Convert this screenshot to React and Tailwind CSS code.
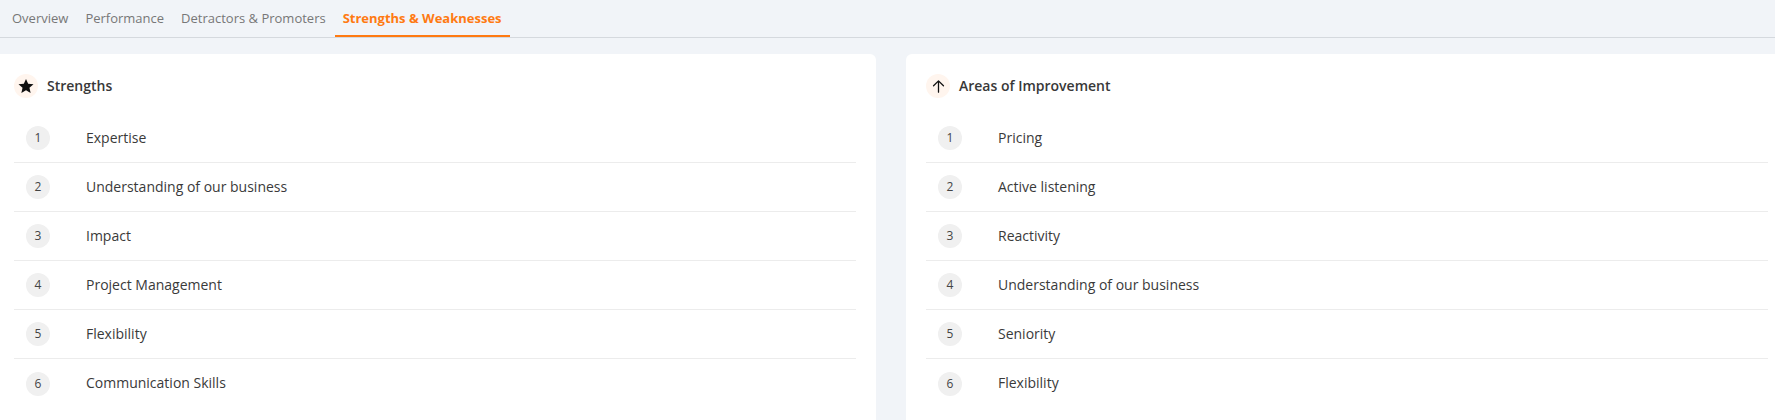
import React from "react";

const tabs = ["Overview", "Performance", "Detractors & Promoters", "Strengths & Weaknesses"];

const strengths = [
  "Expertise",
  "Understanding of our business",
  "Impact",
  "Project Management",
  "Flexibility",
  "Communication Skills",
];

const improvements = [
  "Pricing",
  "Active listening",
  "Reactivity",
  "Understanding of our business",
  "Seniority",
  "Flexibility",
];

const StarIcon = () => (
  <svg viewBox="0 0 24 24" className="w-[18px] h-[18px]" fill="#111">
    <path d="M12 2.5l2.9 6.6 7.1.6-5.4 4.7 1.6 7-6.2-3.7-6.2 3.7 1.6-7L2 9.7l7.1-.6z" />
  </svg>
);

const ArrowUpIcon = () => (
  <svg viewBox="0 0 24 24" className="w-[17px] h-[17px]" fill="none" stroke="#111" strokeWidth="1.8" strokeLinecap="round" strokeLinejoin="round">
    <path d="M12 20V4M5 11l7-7 7 7" />
  </svg>
);

const Card = ({ title, icon, items }) => (
  <div className="w-[882px] shrink-0 bg-white rounded-md px-5 pt-5 pb-6">
    <div className="flex items-center gap-[9px] mb-4">
      <div className="w-6 h-6 rounded-full bg-[#fff5ee] flex items-center justify-center">{icon}</div>
      <h3 className="text-[14px] font-semibold text-[#383838] pb-[2px]">{title}</h3>
    </div>
    <ul>
      {items.map((item, i) => (
        <li
          key={item + i}
          className={
            "flex items-center h-[49px] px-3 " +
            (i < items.length - 1 ? "border-b border-[#ececec]" : "")
          }
        >
          <span className="w-6 h-6 rounded-full bg-[#f0f0f0] flex items-center justify-center text-[12px] text-[#444]">
            {i + 1}
          </span>
          <span className="ml-[36px] text-[14px] text-[#3a3a3a] pb-[2px]">{item}</span>
        </li>
      ))}
    </ul>
  </div>
);

export default function App() {
  return (
    <div
      className="min-h-screen w-full bg-[#f1f4f8] overflow-hidden"
      style={{ fontFamily: '"Open Sans", "Liberation Sans", sans-serif' }}
    >
      <div className="flex h-[38px] border-b border-[#d5d9de] pl-1 gap-px">
        {tabs.map((t, i) => {
          const active = i === tabs.length - 1;
          return (
            <div
              key={t}
              className={
                "h-[37px] flex items-center px-2 text-[13px] " +
                (active
                  ? "border-b-2 border-[#ff7a12] text-[#ff7a12] font-bold pt-[2px]"
                  : "text-[#777]")
              }
            >
              {t}
            </div>
          );
        })}
      </div>
      <div className="flex gap-[30px] pt-4 -ml-[6px]">
        <Card title="Strengths" icon={<StarIcon />} items={strengths} />
        <Card title="Areas of Improvement" icon={<ArrowUpIcon />} items={improvements} />
      </div>
    </div>
  );
}
